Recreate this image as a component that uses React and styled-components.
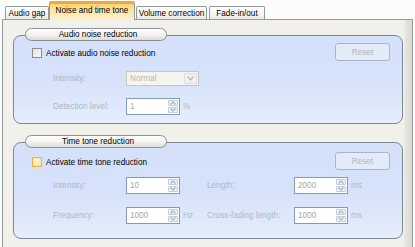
import React from 'react';
import styled, { createGlobalStyle, css } from 'styled-components';

const Global = createGlobalStyle`
  html, body { margin: 0; padding: 0; background: #fcfcfb; }
  body { font-family: "Liberation Sans", Arial, sans-serif; font-size: 8.2px; color: #000; }
  * { box-sizing: border-box; }
`;

const Screen = styled.div`
  width: 415px;
  height: 247px;
  overflow: hidden;
  background: #fcfcfb;
`;

const TabBar = styled.div`
  display: flex;
  align-items: flex-end;
  height: 19px;
  padding-left: 5px;
  position: relative;
  z-index: 2;
`;

const Tab = styled.div`
  width: ${p => p.$w}px;
  height: 13px;
  margin-right: ${p => p.$gap ?? 2}px;
  border: 1px solid #919b9c;
  border-bottom: none;
  border-radius: 2px 2px 0 0;
  background: linear-gradient(#ffffff, #f3f3ef 70%, #ebeae4);
  display: flex;
  align-items: center;
  justify-content: center;
  white-space: nowrap;
  padding-top: 1px;
  ${p => p.$active && css`
    height: 19px;
    margin-bottom: -1px;
    margin-left: -1px;
    border-top: 3px solid #f2a73a;
    background: linear-gradient(#fdd475, #fde7a9 45%, #fdf1cd);
    align-items: flex-start;
    padding-top: 2px;
  `}
`;

const Panel = styled.div`
  margin-left: 2px;
  width: 411px;
  height: 240px;
  border: 1px solid #919b9c;
  background: linear-gradient(to right, #f1f0eb 0, #f1f0eb 401px, #e6e5df 402px, #d9d8d1 410px);
  padding: 8px 0 0 10px;
`;

const Group = styled.div`
  width: 390px;
  margin-top: ${p => p.$mt || 0}px;
`;

const Legend = styled.div`
  position: relative;
  z-index: 1;
  margin-left: 12px;
  margin-bottom: -6px;
  width: 142px;
  height: 13px;
  border: 1px solid #8a8f96;
  border-radius: 7px;
  background: linear-gradient(#ffffff, #f3f3f1 50%, #dcdcd8);
  display: flex;
  align-items: center;
  justify-content: center;
  padding-left: 4px;
`;

const Box = styled.div`
  border: 1px solid #7c8794;
  border-radius: 8px;
  background: linear-gradient(#d5e1fa 0%, #d6e2fa 50%, #e6edfc 100%);
  padding: ${p => p.$pt}px 12px ${p => p.$pb}px 18px;
`;

const Row = styled.div`
  display: flex;
  align-items: center;
  height: ${p => p.$h || 17}px;
  margin-top: ${p => p.$mt || 0}px;
`;

const TopRow = styled(Row)`
  justify-content: space-between;
`;

const CheckLabel = styled.label`
  display: flex;
  align-items: center;
  gap: 4px;
  margin-top: ${p => p.$dy || 0}px;
`;

const Check = styled.span`
  width: 10px;
  height: 10px;
  border: 1px solid ${p => (p.$hover ? '#f3b23a' : '#8c8c8c')};
  background: ${p => (p.$hover
    ? 'linear-gradient(135deg, #fdf6dc, #f6e7b4)'
    : 'linear-gradient(135deg, #e4e4e0, #fbfbfa)')};
  box-shadow: ${p => (p.$hover ? 'inset 0 0 0 1px #fde3a0' : 'none')};
`;

const ResetButton = styled.button`
  width: 55px;
  height: 18px;
  border: 1px solid #a9b4c4;
  border-radius: 3px;
  background: #e4ebf8;
  color: #b2b6bd;
  font: inherit;
  padding: 0;
`;

const Label = styled.span`
  width: ${p => p.$w}px;
  margin-left: ${p => p.$ml || 0}px;
  color: #b2b6bd;
  white-space: nowrap;
`;

const Unit = styled.span`
  width: ${p => p.$w}px;
  padding-left: 3px;
  color: #b2b6bd;
`;

const Select = styled.div`
  width: 73px;
  height: 15px;
  border: 1px solid #c9c7ba;
  background: #f5f4ef;
  display: flex;
  align-items: center;
  justify-content: space-between;
  padding: 0 1px 0 3px;
  color: #b9b9b1;
`;

const DropBtn = styled.span`
  width: 13px;
  height: 11px;
  border: 1px solid #dcdfe4;
  border-radius: 1px;
  background: #eef0f3;
  display: flex;
  align-items: center;
  justify-content: center;
`;

const SpinInput = styled.div`
  width: 54px;
  height: 17px;
  border: 1px solid #7f9db9;
  background: #ffffff;
  display: flex;
  align-items: center;
  justify-content: space-between;
  padding: 0 1px 0 3px;
  color: #a8a8a8;
`;

const Spin = styled.span`
  display: flex;
  flex-direction: column;
  gap: 1px;
`;

const SpinHalf = styled.span`
  width: 10px;
  height: 6px;
  border: 1px solid #c3cddc;
  border-radius: 1px;
  background: #edf1f7;
  display: flex;
  align-items: center;
  justify-content: center;
`;

const Arrow = ({ up }) => (
  <svg width="6" height="4" viewBox="0 0 6 4">
    <path d={up ? 'M0.5 3.5 L3 1 L5.5 3.5' : 'M0.5 0.5 L3 3 L5.5 0.5'} fill="none" stroke="#a7b0bd" strokeWidth="1.1" />
  </svg>
);

const Spinner = ({ value }) => (
  <SpinInput>
    <span>{value}</span>
    <Spin>
      <SpinHalf><Arrow up /></SpinHalf>
      <SpinHalf><Arrow /></SpinHalf>
    </Spin>
  </SpinInput>
);

const Combo = ({ value }) => (
  <Select>
    <span>{value}</span>
    <DropBtn>
      <svg width="7" height="5" viewBox="0 0 7 5">
        <path d="M0.5 0.8 L3.5 3.8 L6.5 0.8" fill="none" stroke="#b5bac2" strokeWidth="1.3" />
      </svg>
    </DropBtn>
  </Select>
);

export default function App() {
  return (
    <Screen>
      <Global />
      <TabBar>
        <Tab $w={44} $gap={1}>Audio gap</Tab>
        <Tab $w={86} $active $gap={1}>Noise and time tone</Tab>
        <Tab $w={71}>Volume correction</Tab>
        <Tab $w={56}>Fade-in/out</Tab>
      </TabBar>
      <Panel>
        <Group>
          <Legend>Audio noise reduction</Legend>
          <Box $pt={7} $pb={8}>
            <TopRow $h={18}>
              <CheckLabel $dy={2}><Check />Activate audio noise reduction</CheckLabel>
              <ResetButton disabled>Reset</ResetButton>
            </TopRow>
            <Row $mt={9}>
              <Label $w={73} $ml={21}>Intensity:</Label>
              <Combo value="Normal" />
            </Row>
            <Row $mt={11}>
              <Label $w={73} $ml={21}>Detection level:</Label>
              <Spinner value="1" />
              <Unit $w={27}>%</Unit>
            </Row>
          </Box>
        </Group>
        <Group $mt={11}>
          <Legend>Time tone reduction</Legend>
          <Box $pt={9} $pb={14}>
            <TopRow $h={18}>
              <CheckLabel $dy={2}><Check $hover />Activate time tone reduction</CheckLabel>
              <ResetButton disabled>Reset</ResetButton>
            </TopRow>
            <Row $mt={7}>
              <Label $w={73} $ml={21}>Intensity:</Label>
              <Spinner value="10" />
              <Unit $w={27}></Unit>
              <Label $w={87}>Length:</Label>
              <Spinner value="2000" />
              <Unit $w={24}>ms</Unit>
            </Row>
            <Row $mt={13}>
              <Label $w={73} $ml={21}>Frequency:</Label>
              <Spinner value="1000" />
              <Unit $w={27}>Hz</Unit>
              <Label $w={87}>Cross-fading length:</Label>
              <Spinner value="1000" />
              <Unit $w={24}>ms</Unit>
            </Row>
          </Box>
        </Group>
      </Panel>
    </Screen>
  );
}
